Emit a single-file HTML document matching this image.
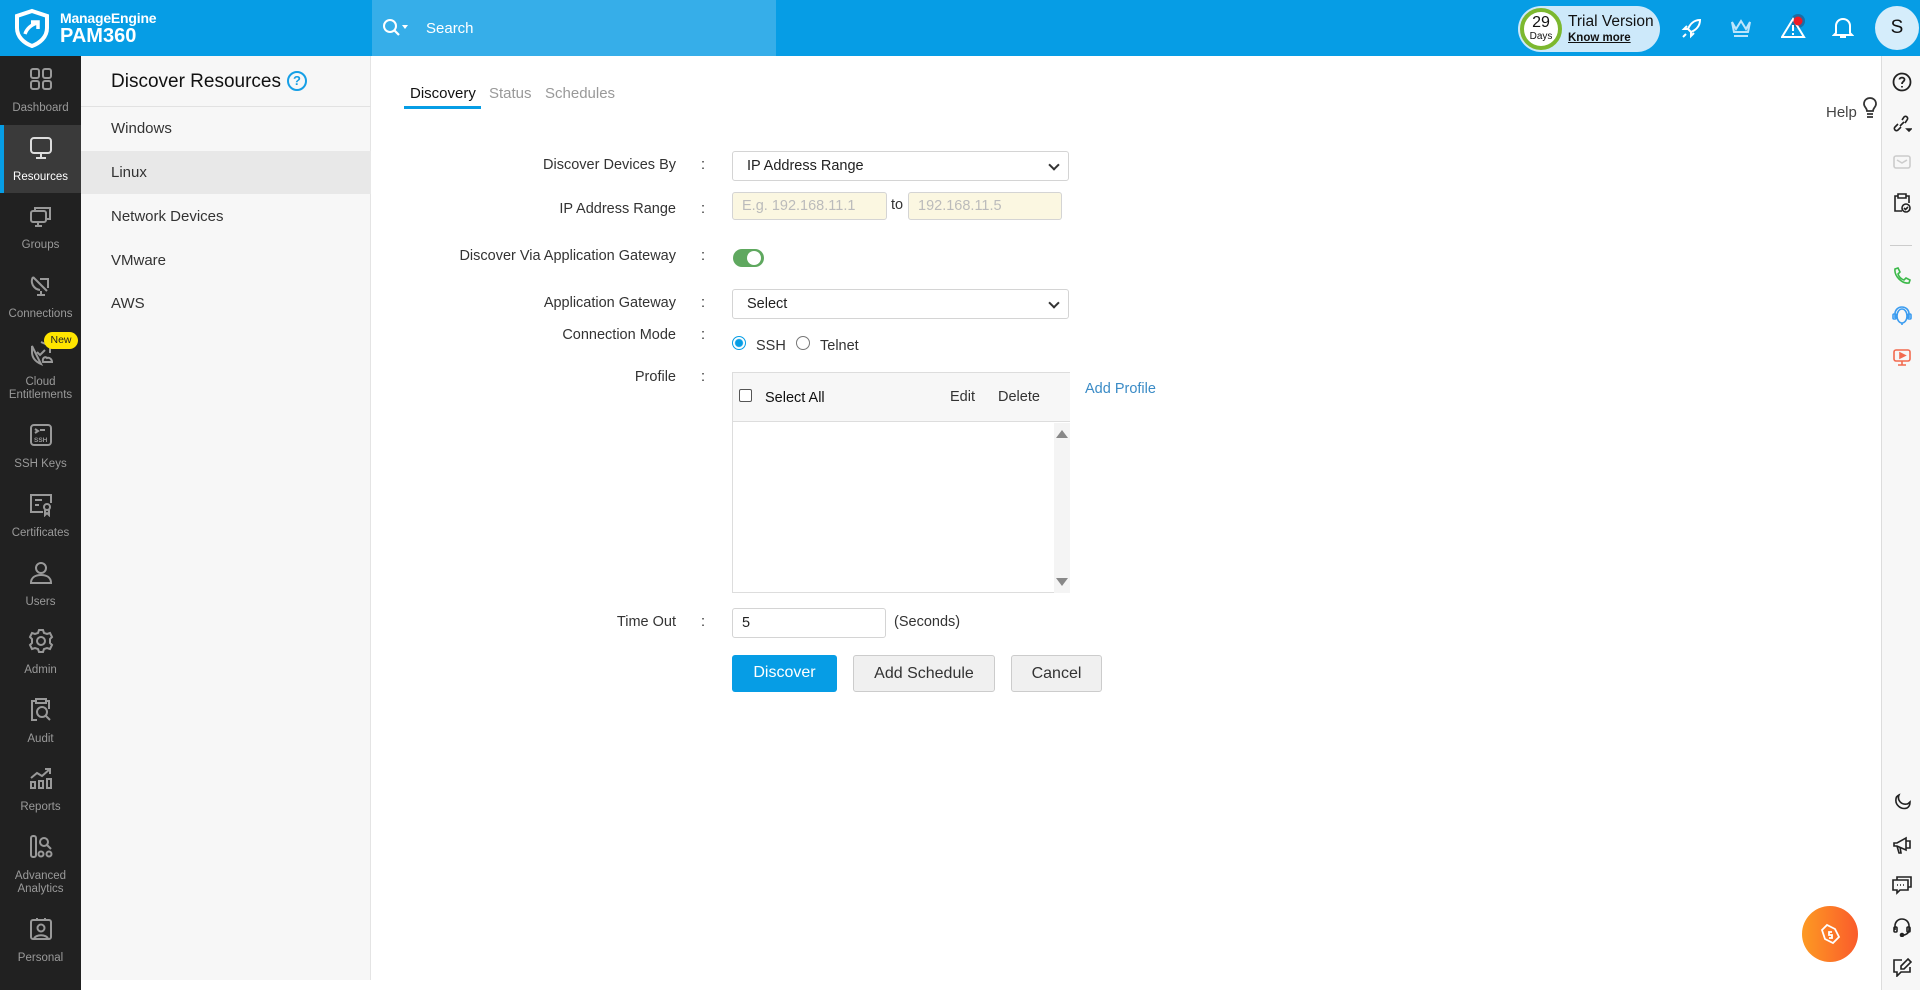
<!DOCTYPE html>
<html><head><meta charset="utf-8"><style>
*{box-sizing:border-box;margin:0;padding:0}
body{width:1920px;height:990px;position:relative;overflow:hidden;font-family:"Liberation Sans",sans-serif;background:#fff;color:#333}
.abs{position:absolute}
.top{left:0;top:0;width:1920px;height:56px;background:#069de5}
.nav{left:0;top:56px;width:81px;height:934px;background:#212121}
.ni{position:absolute;left:0;width:81px;height:68.6px;text-align:center;color:#9a9a9a;font-size:11.5px;line-height:13px}
.ni svg{display:block;margin:10px auto 10px;width:26px;height:26px}
.ni.act{background:#3a3a3a;color:#fff}
.ni.act:before{content:"";position:absolute;left:0;top:0;width:4px;height:100%;background:#069de5}
.sec{left:81px;top:56px;width:290px;height:924px;background:#f7f7f7;border-right:1px solid #e4e4e4}
.si{position:absolute;left:0;width:290px;height:43px;line-height:43px;padding-left:30px;font-size:15px;color:#333}
.lbl{position:absolute;right:1244px;font-size:14.5px;color:#333;text-align:right;white-space:nowrap}
.col{position:absolute;left:701px;font-size:14.5px}
.sel{position:absolute;left:732px;width:337px;height:30px;border:1px solid #d4d4d4;border-radius:3px;background:#fff;font-size:14.5px;line-height:28px;padding-left:14px;color:#222}
.sel:after{content:"";position:absolute;right:10px;top:9px;width:6px;height:6px;border-right:2px solid #333;border-bottom:2px solid #333;transform:rotate(45deg)}
.inp{position:absolute;height:28px;border:1px solid #d4d4d4;border-radius:3px;font-size:14.5px;line-height:26px;padding-left:9px}
.btn{position:absolute;top:655px;height:37px;border-radius:3px;font-size:16px;text-align:center;line-height:35px}
.rs{left:1881px;top:56px;width:39px;height:934px;background:#f7f7f7;border-left:1px solid #ddd}
.rs svg{position:absolute;left:10px;width:20px;height:20px}
.tb svg{position:absolute}
</style></head><body>
<div class="abs top"></div>
<svg class="abs" style="left:12px;top:8px" width="40" height="40" viewBox="0 0 40 40"><path d="M20 3 L35 8 V20 C35 29 28 35 20 38 C12 35 5 29 5 20 V8 Z" fill="none" stroke="#fff" stroke-width="4"/><path d="M13 26 C15 20 19 17 25 15 M19 14 H26 V21" fill="none" stroke="#fff" stroke-width="3.5"/></svg>
<div class="abs" style="left:60px;top:10px;color:#fff;font-weight:bold;font-size:14px;letter-spacing:-.2px">ManageEngine</div>
<div class="abs" style="left:60px;top:25px;color:#fff;font-weight:bold;font-size:20px">PAM360</div>
<div class="abs" style="left:372px;top:0;width:404px;height:56px;background:#36aee9"></div>
<svg class="abs" style="left:382px;top:18px" width="30" height="20" viewBox="0 0 30 20"><circle cx="8" cy="8" r="6" fill="none" stroke="#fff" stroke-width="2"/><path d="M12.5 12.5 L17 17" stroke="#fff" stroke-width="2.2"/><path d="M20 7 L26 7 L23 11Z" fill="#fff"/></svg>
<div class="abs" style="left:426px;top:20px;color:#fff;font-size:15px">Search</div>
<div class="abs" style="left:1518px;top:6px;width:142px;height:46px;border-radius:23px;background:#cde9fa"></div>
<div class="abs" style="left:1520px;top:8px;width:42px;height:42px;border-radius:50%;border:4px solid #7cb82f;background:#fff;text-align:center;color:#111"><div style="font-size:16px;line-height:17px;margin-top:2px">29</div><div style="font-size:10px">Days</div></div>
<div class="abs" style="left:1568px;top:13px;font-size:15.5px;color:#111">Trial Version</div>
<div class="abs" style="left:1568px;top:32px;font-size:11.5px;font-weight:bold;color:#111;text-decoration:underline">Know more</div>
<div class="tb">
<svg style="left:1680px;top:16px" width="24" height="24" viewBox="0 0 24 24" fill="none" stroke="#fff" stroke-width="2"><path d="M20 4 C14 4 10 8 8 13 L11 16 C16 14 20 10 20 4Z"/><path d="M8 13 L4 13 L7 10 M11 16 L11 20 L14 17 M6 18 L3 21"/></svg>
<svg style="left:1729px;top:17px" width="24" height="22" viewBox="0 0 24 22" fill="none" stroke="#bde5fb" stroke-width="2"><path d="M3 5 L7 12 L12 4 L17 12 L21 5 L19 15 H5 Z M5 19 H19"/></svg>
<svg style="left:1781px;top:14px" width="26" height="26" viewBox="0 0 26 26"><circle cx="17" cy="7" r="7" fill="#1b6ea5"/><path d="M12 5 L23 23 H1 Z" fill="none" stroke="#fff" stroke-width="2"/><path d="M12 11 V17 M12 19 V21" stroke="#fff" stroke-width="2"/><circle cx="17" cy="7" r="4.5" fill="#ee1c25"/></svg>
<svg style="left:1832px;top:16px" width="22" height="24" viewBox="0 0 22 24" fill="none" stroke="#fff" stroke-width="2"><path d="M4 17 V10 C4 6 7 3 11 3 C15 3 18 6 18 10 V17 L20 19 H2 Z M8 21 H14"/></svg>
</div>
<div class="abs" style="left:1875px;top:6px;width:44px;height:44px;border-radius:50%;background:#d5edfb;text-align:center;line-height:44px;font-size:19px;color:#111">S</div>

<div class="abs nav">
<div class="ni" style="top:0"><svg viewBox="0 0 26 26" fill="none" stroke="#999" stroke-width="2"><rect x="3" y="3" width="8" height="9" rx="2"/><rect x="15" y="3" width="8" height="9" rx="2"/><rect x="3" y="15" width="8" height="8" rx="2"/><rect x="15" y="15" width="8" height="8" rx="2"/></svg>Dashboard</div>
<div class="ni act" style="top:68.6px"><svg viewBox="0 0 26 26" fill="none" stroke="#ddd" stroke-width="2"><rect x="3" y="3" width="20" height="15" rx="3"/><path d="M13 18 V23 M8 23 H18"/></svg>Resources</div>
<div class="ni" style="top:137.2px"><svg viewBox="0 0 26 26" fill="none" stroke="#999" stroke-width="2"><rect x="3" y="8" width="15" height="11" rx="2"/><path d="M7 8 V5 H22 V16 H18 M10 19 V23 M7 23 H14"/></svg>Groups</div>
<div class="ni" style="top:205.8px"><svg viewBox="0 0 26 26" fill="none" stroke="#999" stroke-width="2"><path d="M5 5 L19 19 M5 5 C2 10 5 17 12 18 M12 7 H20 V16 M13 19 V23 M9 23 H17"/></svg>Connections</div>
<div class="ni" style="top:274.4px"><svg viewBox="0 0 26 26" fill="none" stroke="#999" stroke-width="2"><path d="M13 2 L22 6 V13 M13 24 C6 21 4 16 4 12 V6 Z M9 12 L12 15 L17 10"/><path d="M15 22 H24 C24 19 21 17 19 18 C17 16 14 18 15 22Z"/></svg>Cloud<br>Entitlements</div>
<div class="abs" style="left:44px;top:276px;width:34px;height:17px;border-radius:9px;background:#ffe500;color:#222;font-size:10.5px;line-height:17px;text-align:center">New</div>
<div class="ni" style="top:356.4px"><svg viewBox="0 0 26 26" fill="none" stroke="#999" stroke-width="2"><rect x="3" y="3" width="20" height="20" rx="3"/><path d="M7 7 L10 9 L7 11 M12 8 H17"/><text x="6" y="20" font-size="6.5" fill="#999" stroke="none" font-weight="bold" font-family="Liberation Sans">SSH</text></svg>SSH Keys</div>
<div class="ni" style="top:425px"><svg viewBox="0 0 26 26" fill="none" stroke="#999" stroke-width="2"><path d="M15 21 H3 V4 H23 V12 M7 9 H14 M7 14 H11"/><circle cx="19" cy="16" r="3"/><path d="M17 19 V24 L19 22 L21 24 V19"/></svg>Certificates</div>
<div class="ni" style="top:493.6px"><svg viewBox="0 0 26 26" fill="none" stroke="#999" stroke-width="2"><circle cx="13" cy="8" r="5"/><path d="M3 23 C3 17 8 15 13 15 C18 15 23 17 23 23 Z"/></svg>Users</div>
<div class="ni" style="top:562.2px"><svg viewBox="0 0 26 26" fill="none" stroke="#999" stroke-width="2"><circle cx="13" cy="13" r="4"/><path d="M11 2 H15 L16 5 L19 6 L22 5 L24 9 L22 11 V15 L24 17 L22 21 L19 20 L16 21 L15 24 H11 L10 21 L7 20 L4 21 L2 17 L4 15 V11 L2 9 L4 5 L7 6 L10 5 Z"/></svg>Admin</div>
<div class="ni" style="top:630.8px"><svg viewBox="0 0 26 26" fill="none" stroke="#999" stroke-width="2"><path d="M8 4 H4 V23 H9 M18 4 H21 V12 M8 2 H18 V6 H8 Z"/><circle cx="14" cy="15" r="5"/><path d="M18 19 L22 23"/></svg>Audit</div>
<div class="ni" style="top:699.4px"><svg viewBox="0 0 26 26" fill="none" stroke="#999" stroke-width="2"><path d="M3 13 L9 8 L14 11 L22 4 M17 4 H22 V9"/><rect x="3" y="17" width="4" height="6"/><rect x="11" y="16" width="4" height="7"/><rect x="19" y="14" width="4" height="9"/></svg>Reports</div>
<div class="ni" style="top:768px"><svg viewBox="0 0 26 26" fill="none" stroke="#999" stroke-width="2"><rect x="3" y="2" width="5" height="21" rx="2"/><circle cx="16" cy="8" r="4"/><path d="M19 11 L23 15"/><circle cx="13" cy="20" r="2.5"/><circle cx="21" cy="20" r="2.5"/></svg>Advanced<br>Analytics</div>
<div class="ni" style="top:850px"><svg viewBox="0 0 26 26" fill="none" stroke="#999" stroke-width="2"><rect x="3" y="4" width="20" height="19" rx="2"/><circle cx="13" cy="12" r="3.5"/><path d="M6 23 C7 18 19 18 20 23 M9 2 V5 M17 2 V5"/></svg>Personal</div>
</div>

<div class="abs sec">
<div class="abs" style="left:30px;top:15px;font-size:19px;color:#111">Discover Resources</div>
<div class="abs" style="left:206px;top:15px;width:20px;height:20px;border-radius:50%;border:2px solid #169fe6;color:#169fe6;font-size:13px;font-weight:bold;text-align:center;line-height:16px">?</div>
<div class="abs" style="left:0;top:50px;width:290px;height:1px;background:#e2e2e2"></div>
<div class="si" style="top:51px">Windows</div>
<div class="si" style="top:95px;background:#e8e8e8">Linux</div>
<div class="si" style="top:139px">Network Devices</div>
<div class="si" style="top:183px">VMware</div>
<div class="si" style="top:226px">AWS</div>
</div>

<div class="abs" style="left:410px;top:85px;font-size:15px;color:#111">Discovery</div>
<div class="abs" style="left:489px;top:85px;font-size:15px;color:#999">Status</div>
<div class="abs" style="left:545px;top:85px;font-size:15px;color:#999">Schedules</div>
<div class="abs" style="left:404px;top:106px;width:77px;height:3px;background:#069de5"></div>

<div class="abs" style="left:1826px;top:104px;font-size:15px;color:#444">Help</div>
<svg class="abs" style="left:1862px;top:97px" width="16" height="22" viewBox="0 0 16 22" fill="none" stroke="#333" stroke-width="1.8"><path d="M5 14 C5 11 2 10 2 7 C2 3 5 1 8 1 C11 1 14 3 14 7 C14 10 11 11 11 14 Z M5 17 H11 M5 20 H11"/></svg>

<div class="lbl" style="top:157px">Discover Devices By</div><div class="col" style="top:157px">:</div>
<div class="sel" style="top:151px">IP Address Range</div>
<div class="lbl" style="top:201px">IP Address Range</div><div class="col" style="top:201px">:</div>
<div class="inp" style="left:732px;top:192px;width:155px;background:#fbf7e1;color:#bbb">E.g. 192.168.11.1</div>
<div class="abs" style="left:891px;top:197px;font-size:14.5px">to</div>
<div class="inp" style="left:908px;top:192px;width:154px;background:#fbf7e1;color:#bbb">192.168.11.5</div>
<div class="lbl" style="top:248px">Discover Via Application Gateway</div><div class="col" style="top:248px">:</div>
<div class="abs" style="left:733px;top:249px;width:31px;height:18px;border-radius:9px;background:#5fa85f"></div>
<div class="abs" style="left:747px;top:251px;width:14px;height:14px;border-radius:50%;background:#fff"></div>
<div class="lbl" style="top:295px">Application Gateway</div><div class="col" style="top:295px">:</div>
<div class="sel" style="top:289px">Select</div>
<div class="lbl" style="top:327px">Connection Mode</div><div class="col" style="top:327px">:</div>
<div class="abs" style="left:732px;top:336px;width:14px;height:14px;border-radius:50%;border:1px solid #069de5;background:radial-gradient(#069de5 3.5px,#fff 4.5px)"></div>
<div class="abs" style="left:756px;top:338px;font-size:14.5px">SSH</div>
<div class="abs" style="left:796px;top:336px;width:14px;height:14px;border-radius:50%;border:1px solid #777"></div>
<div class="abs" style="left:820px;top:338px;font-size:14.5px">Telnet</div>
<div class="lbl" style="top:369px">Profile</div><div class="col" style="top:369px">:</div>
<div class="abs" style="left:732px;top:372px;width:338px;height:221px;border:1px solid #ddd;border-right:none"></div>
<div class="abs" style="left:733px;top:373px;width:337px;height:49px;background:#f7f7f7;border-bottom:1px solid #ddd"></div>
<div class="abs" style="left:739px;top:389px;width:13px;height:13px;border:1px solid #555;border-radius:2px;background:#fff"></div>
<div class="abs" style="left:765px;top:390px;font-size:14.5px;color:#111">Select All</div>
<div class="abs" style="left:950px;top:389px;font-size:14.5px">Edit</div>
<div class="abs" style="left:998px;top:389px;font-size:14.5px">Delete</div>
<div class="abs" style="left:1054px;top:423px;width:16px;height:170px;background:#f4f4f4"></div>
<div class="abs" style="left:1056px;top:430px;border-left:6px solid transparent;border-right:6px solid transparent;border-bottom:8px solid #888"></div>
<div class="abs" style="left:1056px;top:578px;border-left:6px solid transparent;border-right:6px solid transparent;border-top:8px solid #888"></div>
<div class="abs" style="left:1085px;top:381px;font-size:14.5px;color:#3a8bc6">Add Profile</div>
<div class="lbl" style="top:614px">Time Out</div><div class="col" style="top:614px">:</div>
<div class="inp" style="left:732px;top:608px;width:154px;height:30px;line-height:28px;background:#fff;color:#222">5</div>
<div class="abs" style="left:894px;top:614px;font-size:14.5px">(Seconds)</div>
<div class="btn" style="left:732px;width:105px;background:#069de5;color:#fff">Discover</div>
<div class="btn" style="left:853px;width:142px;background:#f0f0f0;border:1px solid #ccc;color:#333">Add Schedule</div>
<div class="btn" style="left:1011px;width:91px;background:#f0f0f0;border:1px solid #ccc;color:#333">Cancel</div>

<div class="abs" style="left:1802px;top:906px;width:56px;height:56px;border-radius:50%;background:linear-gradient(90deg,#fd9a23,#fa5b2b)"></div>
<svg class="abs" style="left:1818px;top:922px" width="24" height="24" viewBox="0 0 24 24" fill="none" stroke="#fff" stroke-width="1.8"><path d="M4 8 L9 3 L17 7 L21 15 L15 21 L7 17 Z"/><path d="M14 10 H11 V13 H14 V16 H11"/></svg>

<div class="abs rs">
<svg style="top:16px" viewBox="0 0 20 20" fill="none" stroke="#222" stroke-width="1.8"><circle cx="10" cy="10" r="8.5"/><path d="M7.5 7.5 C7.5 5 12.5 5 12.5 7.5 C12.5 9.5 10 9.5 10 12 M10 14 V15.5"/></svg>
<svg style="top:58px" viewBox="0 0 20 20" fill="none" stroke="#222" stroke-width="1.6"><path d="M8 12 L12 8 M6 10 L3 13 C1 15 4 18 6 16 L9 13 M13 9 L15 6 C17 4 14 1 12 3 L10 6"/><path d="M15 15 H19 L17 17Z" fill="#222"/></svg>
<svg style="top:96px" viewBox="0 0 20 20" fill="none" stroke="#ccc" stroke-width="1.6"><rect x="2" y="4" width="16" height="12" rx="2"/><path d="M5 8 L10 11 L15 8"/></svg>
<svg style="top:137px" viewBox="0 0 20 20" fill="none" stroke="#222" stroke-width="1.6"><path d="M6 3 H3 V18 H10 M14 3 H17 V10 M6 1 H14 V5 H6Z"/><circle cx="14" cy="15" r="4"/><path d="M12 15 L13.5 16.5 L16 14"/></svg>
<div class="abs" style="left:8px;top:189px;width:22px;height:1px;background:#ccc"></div>
<svg style="top:210px" viewBox="0 0 20 20" fill="none" stroke="#3cb94a" stroke-width="1.6"><path d="M3 3 C2 10 10 18 17 17 L18 14 L14 12 L12 14 C9 13 7 11 6 8 L8 6 L6 2 Z"/></svg>
<svg style="top:250px" viewBox="0 0 20 20" fill="none" stroke="#3b9cf0" stroke-width="1.6"><ellipse cx="10" cy="10" rx="5" ry="7"/><path d="M3 12 V8 C3 4 6 1 10 1 C14 1 17 4 17 8 V12 M10 17 V19"/><rect x="1" y="8" width="3" height="5" rx="1"/><rect x="16" y="8" width="3" height="5" rx="1"/></svg>
<svg style="top:291px" viewBox="0 0 20 20" fill="none" stroke="#f26a4f" stroke-width="1.6"><rect x="2" y="3" width="16" height="11" rx="2"/><path d="M8 6 L13 8.5 L8 11Z" fill="#f26a4f"/><path d="M10 14 V18 M6 18 H14"/></svg>
<svg style="top:737px" viewBox="0 0 20 20" fill="none" stroke="#222" stroke-width="1.6"><path d="M15 15 C9 17 3 12 4 6 C4 4 5 3 7 2 C5 7 9 12 15 11 C16 11 17 10 18 9 C18 12 17 14 15 15Z"/></svg>
<svg style="top:779px" viewBox="0 0 20 20" fill="none" stroke="#222" stroke-width="1.6"><path d="M2 8 H5 L14 3 V15 L5 11 H2 Z M5 11 L7 18 H9 L8 12 M14 6 H18 V13 H14"/></svg>
<svg style="top:819px" viewBox="0 0 20 20" fill="none" stroke="#222" stroke-width="1.6"><path d="M5 5 V2 H19 V12 H16 M1 5 H16 V15 H8 L5 18 V15 H1 Z"/><path d="M5 10 H6 M8 10 H9 M11 10 H12"/></svg>
<svg style="top:861px" viewBox="0 0 20 20" fill="none" stroke="#222" stroke-width="1.6"><path d="M3 13 V9 C3 5 6 2 10 2 C14 2 17 5 17 9 V13 M17 13 C17 16 14 18 11 18"/><rect x="2" y="10" width="3" height="5" rx="1"/><rect x="15" y="10" width="3" height="5" rx="1"/><circle cx="10" cy="18" r="1.5" fill="#222"/></svg>
<svg style="top:901px" viewBox="0 0 20 20" fill="none" stroke="#222" stroke-width="1.6"><path d="M10 3 H2 V15 H5 V19 L9 15 H18 V10 M16 2 L19 5 L12 12 H9 V9 Z"/></svg>
</div>
</body></html>
